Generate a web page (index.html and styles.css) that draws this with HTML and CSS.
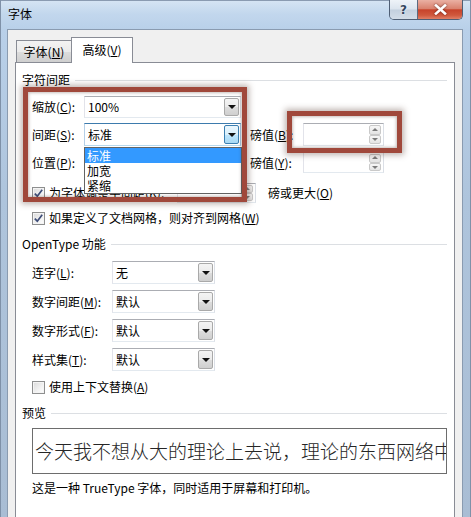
FILE: index.html
```html
<!DOCTYPE html>
<html lang="zh-CN">
<head>
<meta charset="utf-8">
<title>字体</title>
<link rel="stylesheet" href="styles.css">
</head>
<body>
<div class="window">
  <div class="titlebar">
    <span class="title">字体</span>
    <div class="caption">
      <div class="cap-btn help">?</div>
      <div class="cap-btn close">
        <svg width="13" height="11" viewBox="0 0 13 11"><path d="M2 1.5 L11 9.5 M11 1.5 L2 9.5" stroke="#fff" stroke-width="2.6" stroke-linecap="square"/></svg>
      </div>
    </div>
  </div>

  <div class="client">
    <div class="tabs">
      <div class="tab">字体(<u>N</u>)</div>
      <div class="tab active">高级(<u>V</u>)</div>
    </div>

    <div class="panel">
      <div class="group-title"><span>字符间距</span></div>

      <div class="row r-a">
        <span class="label lw1">缩放(<u>C</u>):</span>
        <div class="combo cw1"><span class="val">100%</span><span class="dd"></span></div>
      </div>

      <div class="row r-b">
        <span class="label lw1">间距(<u>S</u>):</span>
        <div class="combo cw1 focus"><span class="val">标准</span><span class="dd"></span>
          <ul class="droplist">
            <li class="sel">标准</li>
            <li>加宽</li>
            <li>紧缩</li>
          </ul>
        </div>
        <span class="label pt">磅值(<u>B</u>):</span>
        <div class="spin sw1"><span class="arrows"><i class="up"></i><i class="down"></i></span></div>
      </div>

      <div class="row r-c">
        <span class="label lw1">位置(<u>P</u>):</span>
        <div class="combo cw1"><span class="val"></span><span class="dd"></span></div>
        <span class="label pt">磅值(<u>Y</u>):</span>
        <div class="spin sw1"><span class="arrows"><i class="up"></i><i class="down"></i></span></div>
      </div>

      <div class="row r-d">
        <span class="check on"><svg width="11" height="11" viewBox="0 0 11 11"><path d="M1.8 5.6 L4.3 8.2 L9.2 1.8" stroke="#3e4d78" stroke-width="1.7" fill="none"/></svg></span>
        <span class="clabel kern">为字体调整字间距(<u>K</u>):</span>
        <div class="spin sw2"><span class="arrows"><i class="up"></i><i class="down"></i></span></div>
        <span class="label more">磅或更大(<u>O</u>)</span>
      </div>

      <div class="row r-e">
        <span class="check on"><svg width="11" height="11" viewBox="0 0 11 11"><path d="M1.8 5.6 L4.3 8.2 L9.2 1.8" stroke="#3e4d78" stroke-width="1.7" fill="none"/></svg></span>
        <span class="clabel">如果定义了文档网格，则对齐到网格(<u>W</u>)</span>
      </div>

      <div class="group-title g2"><span>OpenType 功能</span></div>

      <div class="row r-o first">
        <span class="label lw2">连字(<u>L</u>):</span>
        <div class="combo cw2"><span class="val">无</span><span class="dd"></span></div>
      </div>
      <div class="row r-o">
        <span class="label lw2">数字间距(<u>M</u>):</span>
        <div class="combo cw2"><span class="val">默认</span><span class="dd"></span></div>
      </div>
      <div class="row r-o">
        <span class="label lw2">数字形式(<u>F</u>):</span>
        <div class="combo cw2"><span class="val">默认</span><span class="dd"></span></div>
      </div>
      <div class="row r-o">
        <span class="label lw2">样式集(<u>T</u>):</span>
        <div class="combo cw2"><span class="val">默认</span><span class="dd"></span></div>
      </div>

      <div class="row r-f">
        <span class="check"></span>
        <span class="clabel">使用上下文替换(<u>A</u>)</span>
      </div>

      <div class="group-title g3"><span>预览</span></div>

      <div class="preview"><span>今天我不想从大的理论上去说，理论的东西网络中</span></div>
      <div class="note-text">这是一种 TrueType 字体，同时适用于屏幕和打印机。</div>
    </div>
  </div>

  <div class="mark m1"></div>
  <div class="mark m2"></div>
</div>
</body>
</html>
```

FILE: styles.css
```css
* { box-sizing: border-box; }
html, body { margin: 0; padding: 0; }
body {
  width: 471px;
  height: 517px;
  overflow: hidden;
  background: #fff;
  font-family: "Noto Sans CJK SC", "Microsoft YaHei", sans-serif;
  font-size: 12px;
  line-height: 16px;
  color: #000;
}
u { text-decoration: underline; text-underline-offset: 1px; }

.window {
  position: relative;
  width: 471px;
  height: 517px;
  padding: 0 8px 0 7px;
  background: linear-gradient(180deg, #d6e5f4 0px, #c2d7ed 14px, #b9d0e9 29px, #aec4dc 200px, #a9bdd4 100%);
  box-shadow: inset 1px 0 0 #7f91a8, inset -1px 0 0 #7f91a8, inset 0 1px 0 #8a9bb1;
}

/* title bar */
.titlebar {
  display: flex;
  align-items: flex-start;
  height: 29px;
}
.title { margin: 6px 0 0 1px; }
.caption {
  margin-left: auto;
  display: flex;
  height: 20px;
  border: 1px solid #4f5f75;
  border-top: none;
  border-radius: 0 0 5px 5px;
  overflow: hidden;
}
.cap-btn {
  display: flex;
  align-items: center;
  justify-content: center;
}
.help {
  width: 28px;
  border-right: 1px solid #5b6b80;
  background: linear-gradient(180deg, #eef3f8 0%, #dbe4ee 48%, #c3d0de 52%, #d3dde8 100%);
  color: #33465e;
  font-family: "DejaVu Sans", sans-serif;
  font-weight: bold;
  font-size: 12px;
  text-shadow: 0 0 2px #fff;
}
.close {
  width: 44px;
  background: linear-gradient(180deg, #eab0a3 0%, #d9826f 45%, #c7432b 52%, #d0583d 80%, #e07f66 100%);
}
.close svg { filter: drop-shadow(0 0 1px rgba(60, 10, 0, 0.7)); }

/* client area */
.client {
  height: 488px;
  background: #f0f0f0;
  border-top: 1px solid #8a9bb0;
  border-left: 1px solid #8a9bb0;
  border-right: 1px solid #8a9bb0;
  padding: 7px 7px 0 7px;
}

.tabs {
  position: relative;
  z-index: 1;
  display: flex;
  align-items: flex-end;
  height: 26px;
  margin: 0 0 -1px 1px;
}
.tab {
  display: flex;
  align-items: center;
  justify-content: center;
  border: 1px solid #898c95;
  border-bottom: none;
}
.tab:first-child {
  width: 56px;
  height: 22px;
  margin-bottom: 1px;
  background: linear-gradient(180deg, #f3f3f3 0%, #ebebeb 50%, #dddddd 51%, #cfcfcf 100%);
}
.tab.active {
  width: 62px;
  height: 26px;
  margin-left: -1px;
  background: #fff;
  padding-bottom: 1px;
}

.panel {
  height: 470px;
  background: #fff;
  border: 1px solid #898c95;
  padding: 0 7px 0 6px;
}

.group-title {
  display: flex;
  align-items: center;
  height: 16px;
  margin-top: 9px;
}
.group-title::after {
  content: "";
  flex: 1;
  margin-left: 5px;
  border-top: 1px solid #dcdfe3;
}
.group-title.g2 { margin-top: 10px; }
.group-title.g3 { margin-top: 10px; }

.row {
  display: flex;
  align-items: center;
  margin-left: 10px;
}
.r-a { height: 22px; margin-top: 8px; }
.r-b { height: 23px; margin-top: 5px; }
.r-c { height: 21px; margin-top: 6px; }
.r-d { height: 20px; margin-top: 10px; }
.r-e { height: 16px; margin-top: 7px; }
.r-o { height: 23px; margin-top: 6px; }
.r-o.first { margin-top: 9px; }
.r-f { height: 16px; margin-top: 8px; }

.label { white-space: nowrap; }
.lw1 { width: 52px; }
.lw2 { width: 80px; }
.label.pt { width: 53px; margin-left: 9px; }
.label.more { margin-left: 12px; }

/* combo box */
.combo {
  position: relative;
  display: flex;
  align-items: stretch;
  height: 100%;
  border: 1px solid #abadb3;
  border-color: #abadb3 #dbdfe6 #e3e9ef #e2e3ea;
  background: #fff;
}
.cw1 { width: 157px; }
.cw2 { width: 103px; }
.combo .val {
  flex: 1;
  display: flex;
  align-items: center;
  padding-left: 3px;
}
.combo .dd {
  position: relative;
  width: 15px;
  margin: 1px;
  border: 1px solid #a9a9a9;
  border-radius: 2px;
  background: linear-gradient(180deg, #f4f4f4 0%, #ebebeb 50%, #dddddd 51%, #cfcfcf 100%);
}
.combo .dd::after {
  content: "";
  position: absolute;
  left: 50%;
  top: 50%;
  margin: -2px 0 0 -4px;
  border-left: 4px solid transparent;
  border-right: 4px solid transparent;
  border-top: 4px solid #111;
}
.combo.focus { border-color: #3d7bad #a4c9e3 #b7d9ed #b5cfe7; }
.combo.focus .dd {
  border-color: #3c7fb1;
  background: linear-gradient(180deg, #eaf6fd 0%, #d9f0fc 50%, #bee6fd 51%, #a7d9f5 100%);
}

.droplist {
  position: absolute;
  z-index: 5;
  left: -1px;
  top: calc(100% + 2px);
  width: 158px;
  margin: 0;
  padding: 0;
  list-style: none;
  background: #fff;
  border: 1px solid #646464;
}
.droplist li {
  height: 15px;
  line-height: 15px;
  padding-left: 2px;
}
.droplist li.sel { background: #3399ff; color: #fff; }

/* spin box */
.spin {
  display: flex;
  justify-content: flex-end;
  height: 100%;
  border: 1px solid #abadb3;
  border-color: #abadb3 #dbdfe6 #e3e9ef #e2e3ea;
  background: #fff;
  padding: 1px;
}
.sw1 { width: 81px; }
.sw2 { width: 79px; }
.arrows {
  width: 12px;
  display: flex;
  flex-direction: column;
  gap: 0;
  margin-right: 1px;
}
.arrows i {
  position: relative;
  flex: 1;
  border: 1px solid #c9c9c9;
  border-radius: 2px;
  background: linear-gradient(180deg, #f7f7f7, #e4e4e4);
}
.arrows i::after {
  content: "";
  position: absolute;
  left: 50%;
  top: 50%;
  margin-left: -3px;
  border-left: 3px solid transparent;
  border-right: 3px solid transparent;
}
.arrows i.up::after { margin-top: -2px; border-bottom: 3px solid #7a7a7a; }
.arrows i.down::after { margin-top: -1px; border-top: 3px solid #7a7a7a; }

/* checkbox */
.check {
  display: flex;
  align-items: center;
  justify-content: center;
  width: 13px;
  height: 13px;
  border: 1px solid #8e8f8f;
  background: linear-gradient(135deg, #dadada 0%, #f2f2f2 60%, #ffffff 100%);
  box-shadow: inset 0 0 0 1px #f4f4f4;
}
.clabel { margin-left: 4px; white-space: nowrap; }
.clabel.kern { width: 128px; }

/* preview */
.preview {
  height: 46px;
  margin: 7px 0 0 10px;
  border: 1px solid #6d6d6d;
  background: #fff;
  overflow: hidden;
  white-space: nowrap;
  display: flex;
  align-items: center;
  padding-left: 2px;
  font-size: 19px;
  line-height: 24px;
  color: #262626;
  font-weight: 300;
}
.note-text {
  margin: 6px 0 0 10px;
  height: 16px;
  white-space: nowrap;
}

/* red annotation frames */
.mark {
  position: absolute;
  z-index: 10;
  border: 5px solid #a0483b;
  box-shadow: 0 0 6px 2px rgba(70, 40, 30, 0.35), inset 0 0 3px 1px rgba(70, 40, 30, 0.3);
}
.m1 { left: 23px; top: 87px; width: 224px; height: 115px; }
.m2 { left: 287px; top: 111px; width: 115px; height: 42px; }
```
